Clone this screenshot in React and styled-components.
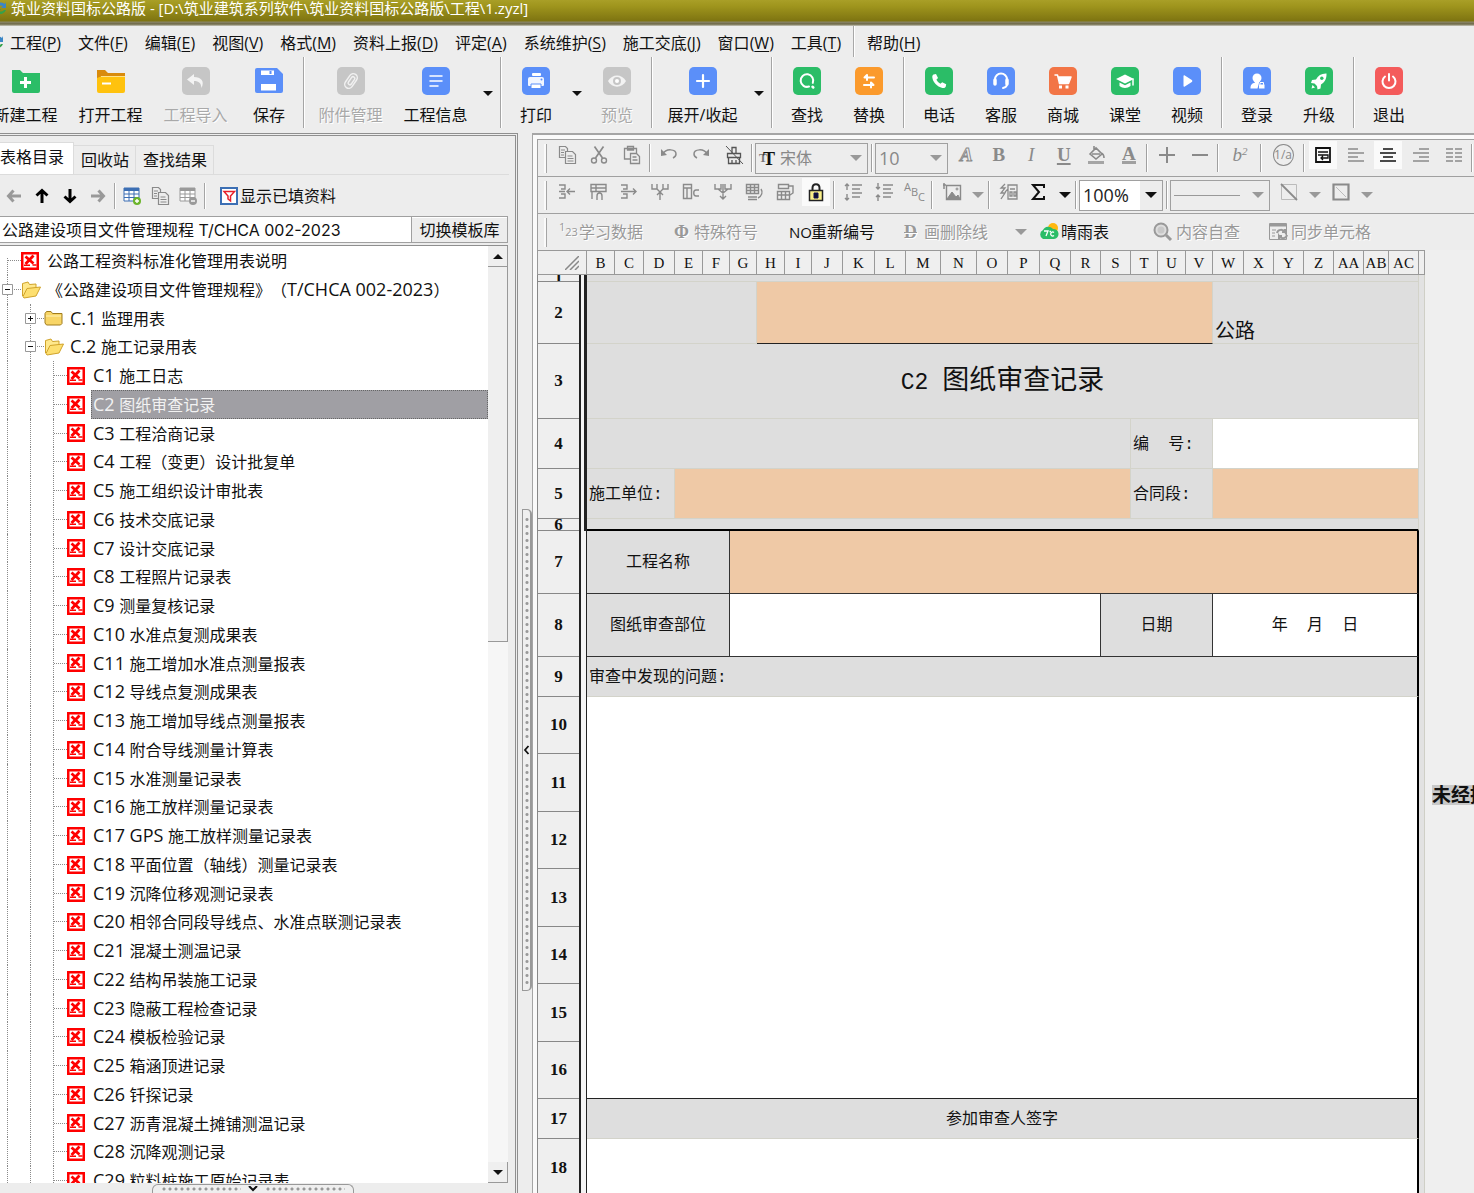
import React from "react";
import styled, { createGlobalStyle, css } from "styled-components";

const UI = '"Open Sans", "Noto Sans CJK SC", sans-serif';
const FIELD = 'Inter, "Noto Sans CJK SC", sans-serif';
const SHEET = '"Liberation Mono", "Noto Sans CJK SC", monospace';
const HEAD = '"Liberation Serif", "Noto Sans CJK SC", serif';

const Global = createGlobalStyle`
  * { box-sizing: border-box; }
  html, body, #root { height: 100%; }
  body { margin: 0; overflow: hidden; background: #ededed; font: 16px/20px ${UI}; color: #111; text-spacing-trim: space-all; }
  button, input, select { font: inherit; color: inherit; margin: 0; padding: 0; border: 0; background: none; border-radius: 0; }
`;

const Shell = styled.div`
  display: flex;
  flex-direction: column;
  height: 100vh;
  overflow: hidden;
`;

/* ---------- title and menus ---------- */
const TitleBar = styled.header`
  display: flex;
  flex: none;
  height: 26px;
  align-items: flex-start;
  gap: 5px;
  color: #fff;
  font-size: 15px;
  line-height: 16px;
  white-space: nowrap;
  background: linear-gradient(#a99f27 0, #9f951d 6px, #7e7411 21px, #8c876a 22px, #6c6744 24px, #c9c8bd 26px);
`;
const MenuBar = styled.nav`
  display: flex;
  flex: none;
  height: 31px;
  align-items: center;
  gap: 17px;
`;
const MenuButton = styled.button`
  white-space: nowrap;
  line-height: 24px;
  padding-top: 3px;
  u { text-underline-offset: 2px; }
`;
const MenuMark = styled.span`
  display: flex;
  flex: none;
  margin-right: -10px;
`;
const MenuRule = styled.span`
  align-self: stretch;
  width: 2px;
  margin: 0 -5px;
  border-left: 1px solid #a8a8a8;
  background: #fff;
`;

/* ---------- main toolbar ---------- */
const MainBar = styled.div`
  display: flex;
  flex: none;
  height: 73px;
  margin-left: -17px;
`;
const BigButton = styled.button`
  display: flex;
  flex: none;
  flex-direction: column;
  align-items: center;
  width: ${(p) => p.$w}px;
  padding-top: 10px;
  gap: 10px;
  white-space: nowrap;
  color: ${(p) => (p.disabled ? "#a9a9a9" : "#111")};
  text-shadow: ${(p) => (p.disabled ? "1px 1px #fff" : "none")};
`;
const BigRule = styled.span`
  width: 2px;
  margin: 0 3px;
  height: 71px;
  border-left: 1px solid #a5a5a5;
  background: #fff;
`;
const CaretButton = styled.button`
  display: flex;
  flex: none;
  align-items: center;
  justify-content: center;
  width: 19px;
`;

/* ---------- workspace ---------- */
const Work = styled.div`
  display: flex;
  flex: 1;
  min-height: 0;
  padding-top: 3px;
`;
const Sidebar = styled.aside`
  display: flex;
  flex: none;
  flex-direction: column;
  width: 518px;
  padding: 7px 6px 0 0;
  border-top: 3px double #8f8f8f;
  border-right: 3px double #8f8f8f;
`;
const Tabs = styled.div`
  display: flex;
  flex: none;
  height: 32px;
  align-items: flex-end;
  border-bottom: 1px solid #dcdcdc;
`;
const Tab = styled.button`
  height: ${(p) => (p.$on ? 32 : 29)}px;
  padding: 0 ${(p) => (p.$on ? "9px 3px 0" : "6px 0 7px")};
  white-space: nowrap;
  background: ${(p) => (p.$on ? "#fff" : "transparent")};
  border: solid #dcdcdc;
  border-width: 1px 1px 0 0;
`;
const SideTools = styled.div`
  display: flex;
  flex: none;
  height: 41px;
  align-items: center;
`;
const SideTool = styled.button`
  display: flex;
  width: 28px;
  justify-content: center;
`;
const SideRule = styled.span`
  width: 2px;
  height: 26px;
  margin: 0 2px;
  border-left: 1px solid #a5a5a5;
  background: #fff;
`;
const FilterButton = styled.button`
  display: flex;
  align-items: center;
  gap: 2px;
  padding-left: 12px;
`;
const FieldRow = styled.div`
  display: flex;
  flex: none;
  height: 27px;
  margin-right: 1px;
  border: solid #a0a0a0;
  border-width: 1px 1px 1px 0;
`;
const TemplateInput = styled.input`
  flex: 1;
  min-width: 0;
  padding-left: 2px;
  background: #fff;
  font-family: ${FIELD};
  border-right: 1px solid #a0a0a0;
`;
const SwitchButton = styled.button`
  width: 95px;
  border-top: 1px solid #fff;
`;
const TreeBox = styled.div`
  display: flex;
  flex: 1;
  min-height: 0;
  margin: 2px 1px 0 0;
  border-top: 1px solid #8f8f8f;
  background: #fff;
`;
const TreeList = styled.ul`
  flex: 1;
  min-width: 0;
  margin: 0;
  padding: 0;
  overflow: hidden;
  list-style: none;
`;
const TreeRow = styled.li`
  display: flex;
  height: 29px;
  &:nth-child(4n + 3) { height: 28px; }
`;
const Guide = styled.span`
  position: relative;
  flex: none;
  display: flex;
  align-items: center;
  width: 23px;
  &::before {
    content: "";
    position: absolute;
    left: 7px;
    top: ${(p) => (p.$from ? "12px" : 0)};
    bottom: 0;
    border-left: 1px dotted #8a8a8a;
  }
  &::after {
    content: "";
    position: absolute;
    left: 8px;
    right: 2px;
    top: 14px;
    border-top: ${(p) => (p.$stub ? "1px dotted #8a8a8a" : 0)};
  }
`;
const Expander = styled.button`
  position: relative;
  z-index: 1;
  display: flex;
  margin-left: 2px;
`;
const NodeIcon = styled.span`
  display: flex;
  flex: none;
  align-items: center;
  width: 24px;
  margin-left: -2px;
`;
const NodeLabel = styled.button`
  text-align: left;
  white-space: nowrap;
  padding-left: 2px;
  flex: ${(p) => (p.$on ? 1 : "none")};
  color: ${(p) => (p.$on ? "#f2f2f2" : "#111")};
  background: ${(p) => (p.$on ? "#a09fa4" : "none")};
  outline: ${(p) => (p.$on ? "1px dotted #666" : "none")};
  outline-offset: -1px;
`;
const Latin = styled.span`
  font-size: 18px;
  line-height: 20px;
`;
const Scroll = styled.div`
  display: flex;
  flex: none;
  flex-direction: column;
  width: 20px;
  background: #f6f6f6;
`;
const ScrollButton = styled.button`
  display: flex;
  flex: none;
  height: 21px;
  align-items: center;
  justify-content: center;
  background: #efefef;
  border: solid #999;
  border-width: 0 1px 1px 0;
`;
const Thumb = styled.div`
  flex: 0 1 40%;
  background: #efefef;
  border: solid #999;
  border-width: 0 1px 1px 0;
  margin-bottom: auto;
`;
const BottomGrip = styled.div`
  display: flex;
  flex: none;
  width: 202px;
  height: 9px;
  margin: 1px 0 0 152px;
  padding: 1px 8px 0;
  gap: 6px;
  border: 1px solid #999;
  border-bottom: 0;
  border-radius: 6px 6px 0 0;
  background: #efefef;
`;
const Dots = styled.span`
  flex: 1;
  background: radial-gradient(circle, #999 1px, transparent 2px) 0 0 / 6px 6px;
`;
const Splitter = styled.div`
  display: flex;
  flex: none;
  flex-direction: column;
  align-items: flex-end;
  width: 14px;
  padding-top: 376px;
`;
const SideGrip = styled.div`
  display: flex;
  flex-direction: column;
  align-items: center;
  width: 10px;
  height: 482px;
  padding: 6px 0;
  border: 1px solid #999;
  border-right-width: 2px;
  border-radius: 0 5px 5px 0;
  background: #efefef;
`;
const VDots = styled.span`
  flex: 1;
  width: 6px;
  background: radial-gradient(circle, #999 1px, transparent 2px) 0 0 / 6px 7px;
`;
const Collapse = styled.button`
  display: flex;
  height: 24px;
  align-items: center;
`;

/* ---------- editor ---------- */
const Editor = styled.main`
  display: flex;
  flex: 1;
  min-width: 0;
  flex-direction: column;
  padding: 4px 0 0 4px;
  border: solid #a5a5a5;
  border-width: 2px 0 0 1px;
  background: #fafafa;
`;
const ToolRow = styled.div`
  display: flex;
  flex: none;
  align-items: center;
  height: 37px;
  padding-left: 6px;
  background: #ededed;
  border: solid #a0a0a0;
  border-width: 1px 0 0 1px;
  overflow: hidden;
`;
const Grip = styled.span`
  flex: none;
  width: 3px;
  height: 29px;
  margin-right: 4px;
  border: solid #a5a5a5;
  border-width: 0 1px 0 0;
  background: #fafafa;
`;
const Group = styled.div`
  display: flex;
  flex: none;
  width: ${(p) => p.$w}px;
`;
const Tool = styled.button`
  display: flex;
  flex: 1;
  height: 34px;
  align-items: center;
  justify-content: center;
  padding-bottom: 6px;
  svg {
    background: ${(p) => (p.$on ? "#fafafa" : "none")};
    box-shadow: ${(p) => (p.$on ? "0 0 0 4px #fafafa" : "none")};
  }
`;
const Rule = styled.span`
  flex: none;
  width: 2px;
  height: 28px;
  margin: 0 2px 0 1px;
  border-left: 1px solid #a0a0a0;
  background: #fff;
`;
const Combo = styled.label`
  display: flex;
  flex: none;
  align-items: center;
  width: ${(p) => p.$w}px;
  height: 31px;
  margin-right: 2px;
  padding-left: 3px;
  border: 1px solid #a0a0a0;
  background: ${(p) => (p.$on ? "#fff" : "#ededed")};
  color: ${(p) => (p.$on ? "#222" : "#888")};
  font-size: ${(p) => (p.$fs || 16)}px;
  select {
    flex: 1;
    min-width: 0;
    appearance: none;
    outline: none;
    opacity: 1;
  }
`;
const ComboCaret = styled.span`
  display: flex;
  align-self: stretch;
  align-items: center;
  justify-content: center;
  width: 22px;
  background: #ededed;
`;
const FontMark = styled.span`
  width: 21px;
  font: bold 18px/20px ${HEAD};
  color: #111;
  small { font-size: 12px; vertical-align: 3px; color: #777; margin-right: -4px; }
`;
const LineSample = styled.span`
  width: 66px;
  border-top: 1px solid #999;
`;
const WideTool = styled.button`
  display: flex;
  flex: none;
  align-items: center;
  width: 115px;
  height: 30px;
  padding: 0 0 0 8px;
  white-space: nowrap;
  color: ${(p) => (p.disabled ? "#999" : "#111")};
  text-shadow: ${(p) => (p.disabled ? "1px 1px #fff" : "none")};
  svg { flex: none; width: 23px; }
`;
const Sheet = styled.div`
  display: flex;
  flex: 1;
  min-height: 0;
  overflow: hidden;
  background: #efefef;
`;
const Table = styled.table`
  flex: none;
  align-self: flex-start;
  width: 888px;
  table-layout: fixed;
  border-collapse: separate;
  border-spacing: 0;
  font: 16px/20px ${SHEET};
  color: #111;
`;
const ColHead = styled.th`
  height: 25px;
  padding: 0;
  font: 15px/20px ${HEAD};
  white-space: nowrap;
  background: #efefef;
  border: solid #999;
  border-width: 1px 1px 1px 0;
`;
const Corner = styled(ColHead)`
  text-align: right;
  border-width: 1px 0 1px 1px;
  svg { display: block; margin-left: auto; }
`;
const RowHead = styled.th`
  padding: 0;
  font: bold 17px/18px ${HEAD};
  background: #efefef;
  border: solid #888;
  border-width: 0 0 1px 1px;
`;
const RowNumber = styled.div`
  display: flex;
  height: ${(p) => p.$h - 1}px;
  overflow: hidden;
  align-items: center;
  justify-content: center;
`;
const Gutter = styled.td`
  padding: 0;
  background: #f4f4f4;
  border: solid #222;
  border-width: 0 ${(p) => (p.$heavy ? "3px 0 2px" : "1px 0 2px")};
`;
const fills = { head: "#dedede", input: "#efc9a6", paper: "#fff" };
const Cell = styled.td`
  padding: 2px 2px 0;
  white-space: pre;
  text-align: ${(p) => p.$align || "center"};
  vertical-align: ${(p) => p.$v || "middle"};
  background: ${(p) => fills[p.$fill || "head"]};
  border: solid #d3d3ca;
  border-width: 0 1px 1px 0;
  ${(p) => p.$boxed && css`border-color: #333;`}
  ${(p) => p.$under && css`border-bottom-color: #222;`}
  ${(p) => p.$thickRight && css`border-right: 2px solid #000;`}
  ${(p) => p.$thickBottom && css`border-bottom: 2px solid #000;`}
  ${(p) => p.$big && css`font-size: 20px; line-height: 20px;`}
`;
const Edge = styled.td`
  padding: 0;
  background: #e2e2e2;
  border-right: 1px solid #cfcfc6;
`;
const SheetTitle = styled.span`
  font-size: 27px;
  line-height: 36px;
  small { font-size: 23px; }
`;
const Notice = styled.div`
  flex: 1;
  min-width: 0;
  padding: 535px 0 0 7px;
  overflow: hidden;
`;
const NoticeText = styled.strong`
  display: inline-block;
  font: bold 19px/20px ${UI};
  white-space: nowrap;
  background: #c8c8c8;
`;

/* ---------- drawings ---------- */
const Caret = ({ c = "#111", w = 12, up }) => (
  <svg width={w} height={w / 2} viewBox="0 0 12 6" aria-hidden="true">
    <path d={up ? "M0 6h12L6 0z" : "M0 0h12L6 6z"} fill={c} />
  </svg>
);

const W = { fill: "#fff" };
const S = { fill: "none", stroke: "#fff", strokeWidth: 2, strokeLinecap: "round", strokeLinejoin: "round" };
const glyphs = {
  undo: <path d="M12 7 5 12.500l7 5.500v-4c5 0 7 2 7.500 7 3.500-7-.5-11-7.500-11z" fill="#f3f3f3" />,
  clip: <g transform="rotate(35 14 14)" fill="none" stroke="#f0f0f0" strokeWidth="1.500"><rect x="10" y="6" width="8" height="16" rx="4" /><rect x="12.500" y="9" width="3.500" height="9" rx="1.700" /></g>,
  lines: <path d="M8 9h12M8 14h12M8 19h8" {...S} strokeWidth="1.500" />,
  print: <g {...W}><rect x="10" y="6" width="9" height="3" rx="1" /><path d="M8 10h12a2 2 0 0 1 2 2v6a1 1 0 0 1-1 1H7a1 1 0 0 1-1-1v-6a2 2 0 0 1 2-2z" opacity=".92" /><path d="M9 17h10v4.500H9z" stroke="#5b8ff9" strokeWidth="1" /><circle cx="19.500" cy="12.500" r="1" fill="#5b8ff9" /></g>,
  eye: <g><path d="M5 14c4-7.500 14-7.500 18 0-4 7.500-14 7.500-18 0z" fill="#f3f3f3" /><circle cx="14" cy="14" r="4" fill="#c6c6c6" /><circle cx="14" cy="14" r="2" fill="#fff" /></g>,
  plus: <path d="M14 8v12M8 14h12" {...S} strokeWidth="2.200" />,
  find: <g {...S}><path d="M16 19.500a6.300 6.300 0 1 1 3.800-3.600" /><path d="m19.500 19.800.8.700" strokeWidth="2.500" /></g>,
  swap: <path d="M19 10.500H9.500L12 8v5M9 18h9.500L16 15.500v5" {...S} />,
  phone: <path d="M8.500 7.500 11 7l2 4-1.600 1.800a9 9 0 0 0 4 4l1.800-1.600 4 2-.5 2.600c-.5 1.200-2 1.500-3.300 1.200C12 19.600 8 15.500 7.300 10.300c-.1-1.200.2-2.300 1.200-2.800z" {...W} />,
  headset: <g {...S}><path d="M8 14v-1.500a6 6 0 0 1 12 0V17c0 2-1.500 3.500-4 4" /><path d="M8 13v4M20 13v4" strokeWidth="3.500" /></g>,
  cart: <g><path d="M6 8h2.500l2 8.500h9L22 10H9" {...S} strokeWidth="1.500" /><path d="M9 10h12.500l-1.800 6H10.500z" {...W} /><rect x="10" y="18.500" width="3" height="3" {...W} /><rect x="16.500" y="18.500" width="3" height="3" {...W} /></g>,
  school: <g {...W}><path d="m14 7.500 9 4.500-9 4.500L5 12z" /><path d="M8.500 15.500v3.500c3 2.600 8 2.600 11 0v-3.500L14 18.300z" /><path d="M22 12v6" {...S} strokeWidth="1.500" /></g>,
  play: <path d="M10.500 9c0-.9.700-1 1.300-.6l7 4.600c.7.500.7 1.500 0 2l-7 4.600c-.6.400-1.300.2-1.300-.6z" {...W} />,
  user: <g {...W}><circle cx="14" cy="11" r="4.500" /><path d="M12 14h4v2l-1.500 5.500H7.500c0-4 1.500-5 4.500-6z" /><rect x="16" y="17.500" width="5.500" height="4" /><path d="M17 17.500v-2h3.500v2" {...S} strokeWidth="1" /></g>,
  rocket: <g {...W}><path d="M21.500 6.500c-5-.2-8.500 2-10.500 6l-4 .5-1 3 3.500.5 2.500 2.500.5 3.500 3-1 .5-4c4-2.500 5.700-6 5.500-11z" /><circle cx="16.800" cy="11.300" r="1.700" fill="#2bbd67" /><path d="m6.500 21.500 1-3.500 2.500 2.500z" /></g>,
  power: <g {...S}><path d="M10 9.500a6.500 6.500 0 1 0 8 0" /><path d="M14 7v6.500" /></g>,
};
const Tile = ({ c, g }) => (
  <svg width="28" height="28" viewBox="0 0 28 28" aria-hidden="true">
    <rect width="28" height="28" rx="5" fill={c} />
    {glyphs[g]}
  </svg>
);
const NewFolder = () => (
  <svg width="28" height="28" viewBox="0 0 28 28" aria-hidden="true">
    <path d="M0 3h8l3 3h17v18a2 2 0 0 1-2 2H2a2 2 0 0 1-2-2z" fill="#2bbd67" />
    <path d="M13.500 10v11M8 15.500h11" stroke="#fff" strokeWidth="3" />
  </svg>
);
const OpenFolder = () => (
  <svg width="28" height="28" viewBox="0 0 28 28" aria-hidden="true">
    <path d="M0 3h8l3 3h17v8H0z" fill="#d98b0c" />
    <path d="M0 11 5 9h23v15a2 2 0 0 1-2 2H2a2 2 0 0 1-2-2z" fill="#ffc20e" />
    <path d="M5 16.500h9" stroke="#fff" strokeWidth="2" />
    <path d="M4 9.500h24" stroke="#ffe28a" />
  </svg>
);
const Floppy = () => (
  <svg width="28" height="28" viewBox="0 0 28 28" aria-hidden="true">
    <path d="M2 1h20l6 6v17a2 2 0 0 1-2 2H2a2 2 0 0 1-2-2V3a2 2 0 0 1 2-2z" fill="#5b8ff9" />
    <path d="M6 3.500h13v4.500H6zM6 17h15v6.500H6z" fill="#fff" />
    <path d="M15.500 4v3" stroke="#5b8ff9" strokeWidth="2" />
  </svg>
);
const Swirl = ({ w }) => (
  <svg width={w} height="16" viewBox={`${12 - w} 0 ${w} 16`} aria-hidden="true">
    <path d="M2 5a6 6 0 0 1 9-1l1-2v6H7l2-2a4 4 0 0 0-5 1z" fill="#3b86c6" />
    <path d="M12 10a6 6 0 0 1-9 3l-1 2V9h5l-2 2a4 4 0 0 0 5-1z" fill="#35a14c" />
  </svg>
);
const FormIcon = () => (
  <svg width="18" height="18" viewBox="0 0 18 18" aria-hidden="true">
    <rect width="18" height="18" fill="#f00" />
    <path d="M2.500 2.500h13v13h-13z" fill="#fff" />
    <path d="m4.500 4.500 8 7M12.500 3.500l-8 8.500" stroke="#f00" strokeWidth="2.800" />
    <path d="M3 13.200h6M11.500 13h4" stroke="#f00" strokeWidth="1.600" fill="none" />
  </svg>
);
const FolderIcon = ({ open }) => (
  <svg width="20" height="18" viewBox="0 0 20 18" aria-hidden="true">
    {open ? (
      <g stroke="#d0a32a">
        <path d="M1.500 15V2.500L7 1l1.500 2.500L15 3v4" fill="#ffe88c" />
        <path d="M2 15.500 6 7.500l13.500-1.500-4.500 9L3 17z" fill="#fddf70" />
      </g>
    ) : (
      <g stroke="#a17c1c">
        <path d="M1 14V4.500L2.500 2.500H7l1.500 2H18v10L16.500 16H2.500z" fill="#f8d566" />
        <path d="M2 7h15" stroke="#fff3b8" />
      </g>
    )}
  </svg>
);
const BoxIcon = ({ plus }) => (
  <svg width="11" height="11" viewBox="0 0 11 11" aria-hidden="true">
    <path d="M.5.5h10v10H.5z" fill="#fff" stroke="#999" />
    <path d={plus ? "M3 5.500h5M5.500 3v5" : "M3 5.500h5"} stroke="#111" />
  </svg>
);
const Arrow = ({ r, c }) => (
  <svg width="16" height="16" viewBox="0 0 16 16" aria-hidden="true">
    <path transform={`rotate(${r} 8 8)`} d="M8 3v12M2.500 7.500 8 2.500l5.500 5" fill="none" stroke={c} strokeWidth="3" />
  </svg>
);
const TableIcon = ({ c, dot, minus }) => (
  <svg width="18" height="18" viewBox="0 0 18 18" aria-hidden="true">
    <path d="M1 1h15v13H1z" fill="#fff" stroke={c} />
    <path d="M1 2.500h15" stroke={c} strokeWidth="3" />
    <path d="M1 7h15M1 10.500h15M6 3v11M11 3v11" stroke={c} />
    <circle cx="14" cy="14" r="4" fill={dot} />
    <path d={minus ? "M12 14h4" : "M12 14h4M14 12v4"} stroke="#fff" strokeWidth="1.400" />
  </svg>
);

const G = "#8a8a8a";
const small = {
  copy: <g strokeWidth="1.200"><path d="M2.500 1.500h6l2 2v9h-8z" /><path d="M8.500 6.500h7l3 3v9h-10z" fill="#ededed" /><path d="M4 5h4M4 7.500h3M4 10h3M10.500 11h5M10.500 13.500h6M10.500 16h6" /></g>,
  cut: <g><path d="m5.500 1.500 8 11.500M14.500 1.500l-8 11.500" strokeWidth="1.700" /><circle cx="5" cy="15.500" r="2.500" strokeWidth="1.400" /><circle cx="15" cy="15.500" r="2.500" strokeWidth="1.400" /></g>,
  paste: <g strokeWidth="1.300"><path d="M8 14H2.500V3.500h12V8M5.500 3V1.500h6V5h-6z" /><path d="M8.500 8.500h6l3 3v7h-9zM10.500 12h4M10.500 15h5" /></g>,
  undo: <g strokeWidth="1.500"><path d="M4 9C7 3 17 4 17 9c0 2-1 3-3 4" /><path d="M2 4v7l6-1z" fill={G} stroke="none" /></g>,
  redo: <g strokeWidth="1.500"><path d="M16 9C13 3 3 4 3 9c0 2 1 3 3 4" /><path d="M18 4v7l-6-1z" fill={G} stroke="none" /></g>,
  brush: <g stroke="#555"><path d="M8 2.500h4v6H8zM3.500 8.500h13v4h-13zM4.500 12.500v6h11v-6M8 18v-3M12 18v-3" strokeWidth="1.300" /><path d="m2 1 17 18" /></g>,
  cellsIn: <g><path d="M2 3h6v4H4M2 16h6v-4H4M2 9.500h6M18 9.500h-8m3-3-3 3 3 3" strokeWidth="1.400" /></g>,
  tableDown: <g strokeWidth="1.400"><path d="M3 2.500h15v7H3zM3 6h15M8 2.500V9M4 9v8M9 18v-4c0-4 5-4 5 0v4" /></g>,
  cellsOut: <g strokeWidth="1.400"><path d="M2 3h6v4H4M2 16h6v-4H4M2 9.500h15m-3-3 3 3-3 3" /></g>,
  forkUp: <g strokeWidth="1.400"><path d="M2 2v5h5V2M13 2v5h5V2M7 7l3 3 3-3M10 18v-8m-3 3 3-3 3 3" /></g>,
  tableIn: <g strokeWidth="1.400"><path d="M2.500 2.500h8v14h-8zM2.500 6h8M6 6v10M18 8h-3c-3 0-3 6 0 6h3" /></g>,
  forkDown: <g strokeWidth="1.400"><path d="M2 2v5h6V2M12 2v5h6V2M10 2v15m-3-3 3 3 3-3M5 7l5 4 5-4" /></g>,
  gridA: <g strokeWidth="1.400"><path d="M2.500 2.500h12v9h-12zM2.500 5.500h12M2.500 8.500h12M6.500 2.500v9M10.500 2.500v9M4 15h9M4 17.500h9M17 7c2 3 1 7-3 9" /></g>,
  gridB: <g strokeWidth="1.400"><path d="M3.500 2.500h10v4h-10zM2.500 9.500h12v8h-12zM2.500 13h12M6.500 9.500v8M10.500 9.500v8M14 4h4v7l-3 2" /></g>,
  lock: <g><path d="M6.500 9V6c0-5 7-5 7 0v3" stroke="#222" strokeWidth="2" /><path d="M3.500 8.500h13v10h-13z" fill="#fbf08a" stroke="#222" strokeWidth="1.500" /><path d="M8 11h4v5H8z" fill="#113" stroke="#115" /></g>,
  spaceUp: <g strokeWidth="1.400"><path d="M4 2v6M2 4l2-2 2 2M4 12v6M2 16l2 2 2-2M9 3h10M9 7h8M9 11h10M9 15h8" /></g>,
  spaceDown: <g strokeWidth="1.400"><path d="M4 1v6M2 5l2 2 2-2M4 19v-6M2 15l2-2 2 2M9 3h10M9 7h8M9 11h10M9 15h8" /></g>,
  image: <g><path d="M1 3h3m-2 -2v6" strokeWidth="1.500" /><path d="M4.500 3.500h14v14h-14z" strokeWidth="1.400" /><path d="m5 17 5-7 4 5 2-2 2 4z" fill={G} /><circle cx="15" cy="7" r="1" /></g>,
  formula: <g strokeWidth="1.300"><path d="M7 2 3 6h4l-4 5h4l-4 6M10 3h9v14h-9zM7 10l3-3M12 7h5M12 10h2v4h-2zM16 10h2v4h-2z" /></g>,
  sigma: <path d="M15 6V3H4l6 7-6 7h11v-3" stroke="#111" strokeWidth="2" />,
  fill: <g strokeWidth="1.600"><path d="m4 9 6-6 6 6-6 5zM8 1v5M15 8c3 1 3 3 3 5M6 9h8" /><path d="M2 17.500h16" stroke="#a5a5a5" strokeWidth="3" /></g>,
  plus: <path d="M10 2v16M2 10h16" strokeWidth="2" />,
  minus: <path d="M2 10h16" strokeWidth="2" />,
  wrap: <g stroke="#111" strokeWidth="1.800"><path d="M3 3h14v14H3z" /><path d="M5 7h10M5 10h10v3H8m2-2-2 2 2 2" strokeWidth="1.300" /></g>,
  left: <path d="M2 4h10M2 8h16M2 12h10M2 16h16" strokeWidth="1.400" />,
  center: <path d="M5 4h10M2 8h16M5 12h10M2 16h16" stroke="#111" strokeWidth="1.600" />,
  right: <path d="M8 4h10M2 8h16M8 12h10M2 16h16" strokeWidth="1.400" />,
  just: <path d="M2 4h7M11 4h7M2 8h7M11 8h7M2 12h7M11 12h7M2 16h7M11 16h7" strokeWidth="1.400" />,
  diag: <g><path d="M2.500 2.500h15v15h-15z" stroke="#bbb" /><path d="m2 2 16 16" strokeWidth="1.800" /></g>,
  border: <g><path d="M2.500 2.500h15v15h-15z" strokeWidth="2.200" /><path d="m5 5 10 10" stroke="#bbb" /></g>,
};
const Ico = ({ n }) => (
  <svg width="20" height="20" viewBox="0 0 20 20" fill="none" stroke={G} aria-hidden="true">
    {small[n]}
  </svg>
);
const Letter = styled.span`
  font: ${(p) => p.$style || "normal"} bold 19px/20px ${HEAD};
  color: #8a8a8a;
  text-decoration: ${(p) => (p.$u ? "underline" : "none")};
  text-decoration-thickness: 2px;
  text-underline-offset: 2px;
  white-space: nowrap;
  ${(p) => p.$hollow && css`color: #ededed; -webkit-text-stroke: 1px #8a8a8a;`}
  ${(p) => p.$small && css`font-size: 12px; font-family: ${UI}; font-weight: 400;`}
  ${(p) => p.$ring && css`width: 21px; border: 1px solid #8a8a8a; border-radius: 50%; text-align: center;`}
  ${(p) => p.$bar && css`border-bottom: 3px solid #a0a0a0; line-height: 15px;`}
  ${(p) => p.$thin && css`font-weight: 400;`}
  sup { font-size: 11px; line-height: 0; vertical-align: 6px; }
`;
const Stairs = styled.span`
  font: 11px/20px ${UI};
  color: #8a8a8a;
  sup, sub { font-size: 11px; line-height: 0; vertical-align: 5px; }
  sub { vertical-align: -5px; }
`;
const Badge = styled.span`
  flex: none;
  width: ${(p) => p.$w}px;
  font: ${(p) => p.$weight || 400} ${(p) => p.$size}px/20px ${(p) => (p.$serif ? HEAD : UI)};
  text-align: left;
  sup, sub { font-size: 11px; line-height: 0; vertical-align: 5px; }
  sub { vertical-align: 0; }
`;

const B = ({ n, l, on, children }) => (
  <Tool type="button" aria-label={l} $on={on}>{n ? <Ico n={n} /> : children}</Tool>
);

/* ---------- data ---------- */
const menus = [
  ["工程", "P"], ["文件", "F"], ["编辑", "E"], ["视图", "V"], ["格式", "M"], ["资料上报", "D"],
  ["评定", "A"], ["系统维护", "S"], ["施工交底", "J"], ["窗口", "W"], ["工具", "T"], null, ["帮助", "H"],
];
const blue = "#5b8ff9", green = "#2bbd67", grey = "#c6c6c6";
const bigTools = [
  { t: "新建工程", i: <NewFolder /> },
  { t: "打开工程", i: <OpenFolder /> },
  { t: "工程导入", c: grey, g: "undo", off: true },
  { t: "保存", i: <Floppy /> },
  "|",
  { t: "附件管理", c: grey, g: "clip", off: true },
  { t: "工程信息", c: blue, g: "lines" },
  "v", "|",
  { t: "打印", c: blue, g: "print" },
  "v",
  { t: "预览", c: grey, g: "eye", off: true },
  "|",
  { t: "展开/收起", c: blue, g: "plus" },
  "v", "|",
  { t: "查找", c: green, g: "find" },
  { t: "替换", c: "#fb9a2c", g: "swap" },
  "|",
  { t: "电话", c: green, g: "phone" },
  { t: "客服", c: blue, g: "headset" },
  { t: "商城", c: "#f27546", g: "cart" },
  { t: "课堂", c: green, g: "school" },
  { t: "视频", c: blue, g: "play" },
  "|",
  { t: "登录", c: blue, g: "user" },
  { t: "升级", c: green, g: "rocket" },
  "|",
  { t: "退出", c: "#f45b5b", g: "power" },
];
const widthOf = (t) => (t.length === 2 ? 62 : t.length === 4 ? 85 : 93);
const forms = [
  "C1 施工日志", "C2 图纸审查记录", "C3 工程洽商记录", "C4 工程（变更）设计批复单", "C5 施工组织设计审批表",
  "C6 技术交底记录", "C7 设计交底记录", "C8 工程照片记录表", "C9 测量复核记录", "C10 水准点复测成果表",
  "C11 施工增加水准点测量报表", "C12 导线点复测成果表", "C13 施工增加导线点测量报表", "C14 附合导线测量计算表",
  "C15 水准测量记录表", "C16 施工放样测量记录表", "C17 GPS 施工放样测量记录表", "C18 平面位置（轴线）测量记录表",
  "C19 沉降位移观测记录表", "C20 相邻合同段导线点、水准点联测记录表", "C21 混凝土测温记录", "C22 结构吊装施工记录",
  "C23 隐蔽工程检查记录", "C24 模板检验记录", "C25 箱涵顶进记录", "C26 钎探记录", "C27 沥青混凝土摊铺测温记录",
  "C28 沉降观测记录", "C29 粒料桩施工原始记录表",
];
const columns = [
  ["B", 28], ["C", 29], ["D", 31], ["E", 28], ["F", 27], ["G", 27], ["H", 28], ["I", 27], ["J", 31], ["K", 32],
  ["L", 31], ["M", 35], ["N", 36], ["O", 31], ["P", 32], ["Q", 31], ["R", 30], ["S", 30], ["T", 27], ["U", 28],
  ["V", 27], ["W", 31], ["X", 30], ["Y", 30], ["Z", 30], ["AA", 30], ["AB", 25], ["AC", 30],
];
const rows = [
  { n: 1, h: 7, cells: [{ s: 28 }] },
  { n: 2, h: 62, cells: [{ s: 6 }, { s: 15, fill: "input", under: true }, { s: 7, text: "公路", align: "left", v: "bottom", big: true }] },
  { n: 3, h: 75, cells: [{ s: 28, text: <SheetTitle><small>C2 </small>图纸审查记录</SheetTitle> }] },
  { n: 4, h: 50, cells: [{ s: 18 }, { s: 3, text: "编  号:", align: "left" }, { s: 7, fill: "paper" }] },
  { n: 5, h: 50, cells: [{ s: 3, text: "施工单位:", align: "left" }, { s: 15, fill: "input" }, { s: 3, text: "合同段:", align: "left" }, { s: 7, fill: "input" }] },
  { n: 6, h: 12, cells: [{ s: 28, thickBottom: true }] },
  { n: 7, h: 63, boxed: true, cells: [{ s: 5, text: "工程名称" }, { s: 23, fill: "input" }] },
  { n: 8, h: 63, boxed: true, cells: [{ s: 5, text: "图纸审查部位" }, { s: 12, fill: "paper" }, { s: 4, text: "日期" }, { s: 7, fill: "paper", text: "年  月  日" }] },
  { n: 9, h: 40, cells: [{ s: 28, text: "审查中发现的问题:", align: "left" }] },
  { n: 10, h: 57, cells: [{ s: 28, r: 7, fill: "paper", under: true }] },
  { n: 11, h: 58 }, { n: 12, h: 57 }, { n: 13, h: 58 }, { n: 14, h: 57 }, { n: 15, h: 58 }, { n: 16, h: 57 },
  { n: 17, h: 40, cells: [{ s: 28, text: "参加审查人签字" }] },
  { n: 18, h: 58, cells: [{ s: 28, fill: "paper" }] },
];

/* Western runs are set a little larger than the Chinese text beside them. */
const mixed = (text) =>
  text.split(/([\x20-\x7e]+)/).map((part, i) => (i % 2 ? <Latin key={i}>{part}</Latin> : part));

const Node = ({ depth, box, icon, text, first, on }) => (
  <TreeRow>
    {Array.from({ length: depth + 1 }, (_, i) => (
      <Guide key={i} $from={first} $stub={i === depth}>
        {box && i === depth ? (
          <Expander type="button" aria-label={box === "plus" ? "展开" : "折叠"}><BoxIcon plus={box === "plus"} /></Expander>
        ) : null}
      </Guide>
    ))}
    <NodeIcon>{icon}</NodeIcon>
    <NodeLabel type="button" $on={on}>{mixed(text)}</NodeLabel>
  </TreeRow>
);

function Tree() {
  return (
    <TreeList>
      <Node depth={0} first icon={<FormIcon />} text="公路工程资料标准化管理用表说明" />
      <Node depth={0} box="minus" icon={<FolderIcon open />} text="《公路建设项目文件管理规程》（T/CHCA 002-2023）" />
      <Node depth={1} box="plus" icon={<FolderIcon />} text="C.1 监理用表" />
      <Node depth={1} box="minus" icon={<FolderIcon open />} text="C.2 施工记录用表" />
      {forms.map((f) => (
        <Node key={f} depth={2} icon={<FormIcon />} text={f} on={f.startsWith("C2 ")} />
      ))}
    </TreeList>
  );
}

function Grid() {
  return (
    <Table>
      <colgroup>
        <col style={{ width: 42 }} />
        <col style={{ width: 8 }} />
        {columns.map(([c, w]) => <col key={c} style={{ width: w }} />)}
        <col style={{ width: 6 }} />
      </colgroup>
      <thead>
        <tr>
          <Corner>
            <svg width="14" height="14" viewBox="0 0 14 14" aria-hidden="true">
              <path d="M0 14 14 0M5 14l9-9M10 14l4-4" stroke="#888" strokeWidth="1.500" />
            </svg>
          </Corner>
          <ColHead />
          {columns.map(([c]) => <ColHead key={c}>{c}</ColHead>)}
          <ColHead />
        </tr>
      </thead>
      <tbody>
        {rows.map((r) => (
          <tr key={r.n} style={{ height: r.h }}>
            <RowHead><RowNumber $h={r.h}>{r.n}</RowNumber></RowHead>
            <Gutter $heavy={r.n < 7} />
            {r.cells && r.cells.map((c, i) => (
              <Cell
                key={i}
                colSpan={c.s}
                rowSpan={c.r}
                $fill={c.fill}
                $align={c.align}
                $v={c.v}
                $big={c.big}
                $under={c.under}
                $boxed={r.boxed}
                $thickBottom={c.thickBottom}
                $thickRight={r.n > 6 && i === r.cells.length - 1}
              >
                {c.text}
              </Cell>
            ))}
            <Edge />
          </tr>
        ))}
      </tbody>
    </Table>
  );
}

export default function App() {
  return (
    <Shell>
      <Global />
      <TitleBar>
        <Swirl w={6} />
        <span>筑业资料国标公路版 - [D:\筑业建筑系列软件\筑业资料国标公路版\工程\1.zyzl]</span>
      </TitleBar>
      <MenuBar>
        <MenuMark><Swirl w={3} /></MenuMark>
        {menus.map((m) =>
          m ? (
            <MenuButton type="button" key={m[0]}>{m[0]}(<u>{m[1]}</u>)</MenuButton>
          ) : (
            <MenuRule key="rule" />
          )
        )}
      </MenuBar>
      <MainBar>
        {bigTools.map((b, i) =>
          b === "|" ? (
            <BigRule key={i} />
          ) : b === "v" ? (
            <CaretButton type="button" aria-label="更多" key={i}><Caret w={10} /></CaretButton>
          ) : (
            <BigButton type="button" key={i} $w={widthOf(b.t)} disabled={b.off}>
              {b.i || <Tile c={b.c} g={b.g} />}
              {b.t}
            </BigButton>
          )
        )}
      </MainBar>
      <Work>
        <Sidebar>
          <Tabs>
            <Tab type="button" $on>表格目录</Tab>
            <Tab type="button">回收站</Tab>
            <Tab type="button">查找结果</Tab>
          </Tabs>
          <SideTools>
            <SideTool type="button" aria-label="后退"><Arrow r={-90} c="#999" /></SideTool>
            <SideTool type="button" aria-label="上移"><Arrow r={0} c="#000" /></SideTool>
            <SideTool type="button" aria-label="下移"><Arrow r={180} c="#000" /></SideTool>
            <SideTool type="button" aria-label="前进"><Arrow r={90} c="#999" /></SideTool>
            <SideRule />
            <SideTool type="button" aria-label="新增表格"><TableIcon c="#3c6fb4" dot="#6cb52c" /></SideTool>
            <SideTool type="button" aria-label="复制表格"><Ico n="copy" /></SideTool>
            <SideTool type="button" aria-label="删除表格"><TableIcon c="#9a9a9a" dot="#9a9a9a" minus /></SideTool>
            <SideRule />
            <FilterButton type="button">
              <svg width="18" height="18" viewBox="0 0 18 18" aria-hidden="true">
                <path d="M1 1h16v16H1z" fill="#fff" stroke="#3c6fb4" strokeWidth="2" />
                <path d="M4 4.500h10.500L10.500 9v5L8 12V9z" fill="none" stroke="#e8212b" strokeWidth="1.500" />
              </svg>
              显示已填资料
            </FilterButton>
          </SideTools>
          <FieldRow>
            <TemplateInput aria-label="模板库" defaultValue="公路建设项目文件管理规程 T/CHCA 002-2023" />
            <SwitchButton type="button">切换模板库</SwitchButton>
          </FieldRow>
          <TreeBox>
            <Tree />
            <Scroll>
              <ScrollButton type="button" aria-label="向上滚动"><Caret up w={10} /></ScrollButton>
              <Thumb />
              <ScrollButton type="button" aria-label="向下滚动"><Caret w={10} /></ScrollButton>
            </Scroll>
          </TreeBox>
          <BottomGrip>
            <Dots />
            <svg width="12" height="7" viewBox="0 0 12 7" aria-hidden="true"><path d="m2 0 4 4 4-4" fill="none" stroke="#111" strokeWidth="2" /></svg>
            <Dots />
          </BottomGrip>
        </Sidebar>
        <Splitter>
          <SideGrip>
            <VDots />
            <Collapse type="button" aria-label="收起侧栏">
              <svg width="7" height="10" viewBox="0 0 7 10" aria-hidden="true"><path d="M5.500 1 2 5l3.500 4" fill="none" stroke="#111" strokeWidth="1.800" /></svg>
            </Collapse>
            <VDots />
          </SideGrip>
        </Splitter>
        <Editor>
          <ToolRow>
            <Grip />
            <Group $w={97}><B n="copy" l="复制" /><B n="cut" l="剪切" /><B n="paste" l="粘贴" /></Group>
            <Rule />
            <Group $w={97}><B n="undo" l="撤销" /><B n="redo" l="重做" /><B n="brush" l="清除格式" /></Group>
            <Rule />
            <Combo $w={113}>
              <FontMark><small>T</small>T</FontMark>
              <select aria-label="字体" disabled><option>宋体</option></select>
              <ComboCaret><Caret c="#999" /></ComboCaret>
            </Combo>
            <Rule />
            <Combo $w={73} $fs={18}>
              <select aria-label="字号" disabled><option>10</option></select>
              <ComboCaret><Caret c="#999" /></ComboCaret>
            </Combo>
            <Group $w={195}>
              <B l="字体设置"><Letter $style="italic" $hollow>A</Letter></B>
              <B l="加粗"><Letter>B</Letter></B>
              <B l="斜体"><Letter $style="italic" $thin>I</Letter></B>
              <B l="下划线"><Letter $u>U</Letter></B>
              <B n="fill" l="填充颜色" />
              <B l="字体颜色"><Letter $bar>A</Letter></B>
            </Group>
            <Rule />
            <Group $w={66}><B n="plus" l="增大" /><B n="minus" l="减小" /></Group>
            <Rule />
            <Group $w={38}><B l="上标"><Letter $style="italic" $thin>b<sup>2</sup></Letter></B></Group>
            <Rule />
            <Group $w={38}><B l="分数"><Letter $small $ring>1/a</Letter></B></Group>
            <Rule />
            <Group $w={163}>
              <B n="wrap" l="自动换行" on /><B n="left" l="左对齐" /><B n="center" l="居中" on /><B n="right" l="右对齐" /><B n="just" l="分散对齐" />
            </Group>
            <Rule />
          </ToolRow>
          <ToolRow>
            <Grip />
            <Group $w={281}>
              <B n="cellsIn" l="插入行" /><B n="tableDown" l="插入列" /><B n="cellsOut" l="追加行" /><B n="forkUp" l="合并" /><B n="tableIn" l="拆分" />
              <B n="forkDown" l="下拆" /><B n="gridA" l="行组" /><B n="gridB" l="列组" /><B n="lock" l="锁定" on />
            </Group>
            <Rule />
            <Group $w={93}>
              <B n="spaceUp" l="增大行距" /><B n="spaceDown" l="减小行距" />
              <B l="文字方向"><Stairs><sup>A</sup>B<sub>C</sub></Stairs></B>
            </Group>
            <Rule />
            <Group $w={52}><B n="image" l="插入图片" /><CaretButton type="button" aria-label="图片选项"><Caret c="#999" /></CaretButton></Group>
            <Rule />
            <Group $w={82}>
              <B n="formula" l="公式" /><B n="sigma" l="求和" />
              <CaretButton type="button" aria-label="求和选项"><Caret /></CaretButton>
            </Group>
            <Rule />
            <Combo $w={84} $on $fs={18}>
              <select aria-label="缩放" defaultValue="100%"><option>100%</option></select>
              <ComboCaret><Caret /></ComboCaret>
            </Combo>
            <Rule />
            <Combo $w={100}>
              <LineSample />
              <select aria-label="线型" disabled><option aria-label="实线" /></select>
              <ComboCaret><Caret c="#999" /></ComboCaret>
            </Combo>
            <Group $w={52}><B n="diag" l="斜线" /><CaretButton type="button" aria-label="斜线选项"><Caret c="#999" /></CaretButton></Group>
            <Group $w={52}><B n="border" l="边框" /><CaretButton type="button" aria-label="边框选项"><Caret c="#999" /></CaretButton></Group>
          </ToolRow>
          <ToolRow>
            <Grip />
            <WideTool type="button" disabled><Badge $w={20} $size={11}><sup>1</sup><sub>2</sub>3</Badge>学习数据</WideTool>
            <WideTool type="button" disabled><Badge $w={20} $size={18} $weight={700} $serif>Φ</Badge>特殊符号</WideTool>
            <WideTool type="button"><Badge $w={22} $size={15}>NO</Badge>重新编号</WideTool>
            <WideTool type="button" disabled><Badge $w={20} $size={18} $weight={700} $serif><s>D</s></Badge>画删除线</WideTool>
            <CaretButton type="button" aria-label="更多选项"><Caret c="#999" /></CaretButton>
            <WideTool type="button">
              <svg height="20" viewBox="0 0 23 20" aria-hidden="true">
                <circle cx="15" cy="6" r="5" fill="#ffb80f" />
                <path d="M5 17a5 5 0 0 1 0-9 6 6 0 0 1 10-1 5 5 0 0 1 1 10z" fill="#2bbd67" />
                <path d="M6 9h4l-2 5M16 10.500a2 2 0 1 0 0 3M11.500 9.500h1.500" fill="none" stroke="#fff" strokeWidth="1.300" />
              </svg>
              晴雨表
            </WideTool>
            <WideTool type="button" disabled>
              <svg height="20" viewBox="0 0 23 20" aria-hidden="true">
                <circle cx="8" cy="8" r="6.500" fill="#ddd" stroke="#999" strokeWidth="2" />
                <circle cx="8" cy="8" r="3.500" fill="#c8c8c8" />
                <path d="m13 13 5 5" stroke="#999" strokeWidth="3" />
              </svg>
              内容自查
            </WideTool>
            <WideTool type="button" disabled>
              <svg height="20" viewBox="0 0 23 20" fill="none" stroke="#999" aria-hidden="true">
                <path d="M1.500 1.500h17v16h-17z" />
                <path d="M2 3h16" strokeWidth="3" />
                <path d="M4 8h4M4 11h3M4 14h3" />
                <path d="M9 11c1-4 6-4 8-1V7m0 3h-3M19 13c-1 4-6 4-8 1v3m0-3h3" strokeWidth="2" />
              </svg>
              同步单元格
            </WideTool>
          </ToolRow>
          <Sheet>
            <Grid />
            <Notice><NoticeText>未经授权</NoticeText></Notice>
          </Sheet>
        </Editor>
      </Work>
    </Shell>
  );
}
